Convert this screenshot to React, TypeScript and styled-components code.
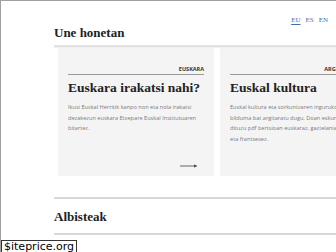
import React from "react";
import styled, { createGlobalStyle } from "styled-components";

const Global = createGlobalStyle`
  html, body { margin: 0; padding: 0; background: #fff; }
  body {
    width: 336px; height: 252px; overflow: hidden; box-sizing: border-box;
    border-top: 1px solid #a0a0a0; border-left: 1px solid #a0a0a0;
    font-family: "Liberation Serif", serif; position: relative;
  }
`;

const Page = styled.div`
  padding-left: 53px;
  width: 292px;
`;

const Header = styled.header`
  display: flex;
  justify-content: space-between;
  align-items: flex-start;
  height: 44px;
  border-bottom: 2px solid #e2e2e2;
  box-shadow: 0 1px 1px rgba(0, 0, 0, 0.06);
`;

const Heading = styled.h2`
  margin: 0;
  padding-top: 24px;
  font: bold 13px/15px "Liberation Serif", serif;
  color: #222;
`;

const SectionHeading = styled(Heading)`
  padding-top: 0;
`;

const Lang = styled.nav`
  display: flex;
  gap: 5px;
  padding-top: 15px;
  margin-right: 18px;
`;

const LangLink = styled.a<{ $active?: boolean }>`
  font: 7px/8px "Liberation Serif", serif;
  color: #3f6fa6;
  text-decoration: ${(p) => (p.$active ? "underline" : "none")};
  text-underline-offset: 2px;
`;

const Cards = styled.div`
  display: flex;
  gap: 6px;
  margin: 1px 0 0 4px;
`;

const Card = styled.article`
  flex: 0 0 156px;
  height: 128px;
  box-sizing: border-box;
  background: #f4f4f4;
  padding: 17px 10px 0;
  display: flex;
  flex-direction: column;
`;

const Label = styled.div`
  text-align: right;
  font: bold 5.5px/9px "Open Sans", sans-serif;
  text-transform: uppercase;
  color: #333;
  border-bottom: 1px solid #9a9a9a;
  white-space: nowrap;
`;

const CardTitle = styled.h3`
  margin: 4px 0 0;
  font: bold 13.5px/18px "Liberation Serif", serif;
  color: #222;
  white-space: nowrap;
`;

const CardText = styled.p<{ $fixedLines?: boolean }>`
  margin: 5px 0 0;
  font: 5.6px/10.5px "Open Sans", sans-serif;
  color: #7a7a7a;
  white-space: ${(p) => (p.$fixedLines ? "nowrap" : "normal")};
`;

const More = styled.div`
  margin-top: auto;
  margin-bottom: 8px;
  display: flex;
  justify-content: flex-end;
  padding-right: 6px;
`;

const Section = styled.section`
  margin-top: 21px;
  border-top: 2px solid #d8d8d8;
  border-bottom: 2px solid #d8d8d8;
  height: 34px;
  display: flex;
  align-items: center;
`;

const Watermark = styled.div`
  position: absolute;
  left: 0;
  bottom: -2px;
  border: 1px solid #333;
  background: #fff;
  padding: 0 2px;
  font: 11px/12px "DejaVu Sans", sans-serif;
  color: #000;
`;

const Arrow = () => (
  <svg width="18" height="4" viewBox="0 0 18 4">
    <line x1="0" y1="2" x2="16" y2="2" stroke="#444" strokeWidth="0.8" />
    <path d="M14 0.6 L17.5 2 L14 3.4 Z" fill="#444" />
  </svg>
);

export default function App() {
  return (
    <>
      <Global />
      <Page>
        <Header>
          <Heading>Une honetan</Heading>
          <Lang>
            <LangLink $active>EU</LangLink>
            <LangLink>ES</LangLink>
            <LangLink>EN</LangLink>
          </Lang>
        </Header>
        <Cards>
          <Card>
            <Label>Euskara</Label>
            <CardTitle>Euskara irakatsi nahi?</CardTitle>
            <CardText>
              Ikusi Euskal Herritik kanpo non eta nola irakatsi dezakezun euskara Etxepare Euskal Institutuaren bitartez.
            </CardText>
            <More>
              <Arrow />
            </More>
          </Card>
          <Card>
            <Label>Argitalpenak</Label>
            <CardTitle>Euskal kultura</CardTitle>
            <CardText $fixedLines>
              Euskal kultura eta sorkuntzaren inguruko
              <br />
              bilduma bat argitaratu dugu. Doan eskuratu
              <br />
              dituzu pdf bertsioan euskaraz, gaztelaniaz,
              <br />
              eta frantsesez.
            </CardText>
          </Card>
        </Cards>
        <Section>
          <SectionHeading>Albisteak</SectionHeading>
        </Section>
      </Page>
      <Watermark>$iteprice.org</Watermark>
    </>
  );
}
